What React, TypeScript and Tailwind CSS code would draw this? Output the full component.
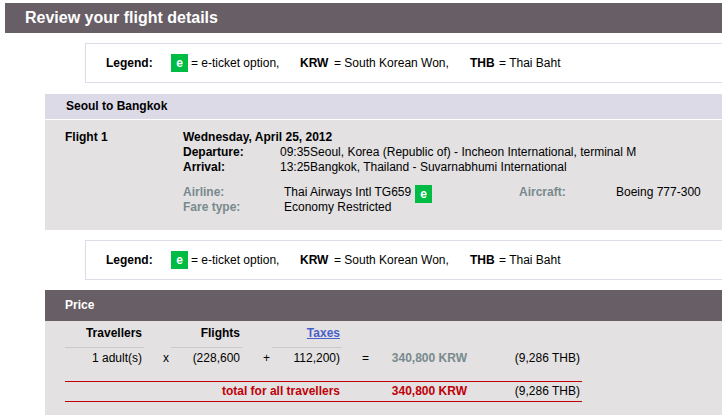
import type { ReactNode } from 'react';

/* ------------------------------------------------------------------ */
/* Data                                                                */
/* ------------------------------------------------------------------ */

interface FlightStop {
  label: string;
  time: string;
  place: string;
}

const STOPS: FlightStop[] = [
  {
    label: 'Departure:',
    time: '09:35',
    place: 'Seoul, Korea (Republic of) - Incheon International, terminal M',
  },
  {
    label: 'Arrival:',
    time: '13:25',
    place: 'Bangkok, Thailand - Suvarnabhumi International',
  },
];

/* ------------------------------------------------------------------ */
/* Shared pieces                                                       */
/* ------------------------------------------------------------------ */

/** Green marker for flights that can be issued as an e-ticket. */
function ETicketBadge() {
  return (
    <span className="flex h-[18px] w-[17px] shrink-0 items-center justify-center bg-[#00bb44] text-xs font-bold text-white">
      e
    </span>
  );
}

/** Explains the badge and the currency codes. */
function Legend() {
  return (
    <div className="ml-20 flex h-10 items-center border border-r-0 border-[#dddbe8] pl-5">
      <span className="w-[65px] font-bold">Legend:</span>
      <span className="flex w-[129px] items-center gap-[3px]">
        <ETicketBadge />= e-ticket option,
      </span>
      <span className="flex w-[170px]">
        <b className="w-[34px]">KRW</b>= South Korean Won,
      </span>
      <span className="flex">
        <b className="w-[29px]">THB</b>= Thai Baht
      </span>
    </div>
  );
}

/** Table heading with the thin rule beneath it. */
function PriceHeading({ children }: { children: ReactNode }) {
  return (
    <th className="h-[27px] border-b border-[#cbc9ca] px-[2px] pb-[2px] font-bold">
      {children}
    </th>
  );
}

/* ------------------------------------------------------------------ */
/* Sections                                                            */
/* ------------------------------------------------------------------ */

function FlightSection() {
  return (
    <section className="ml-10">
      <h2 className="mb-px bg-[#dddae8] py-[5px] pl-[21px] font-bold">
        Seoul to Bangkok
      </h2>
      <div className="flex bg-[#e3e1e2] pt-[10px] pb-[15px] pl-5">
        <h3 className="w-[118px] shrink-0 font-bold">Flight 1</h3>
        <div className="min-w-0 flex-1">
          <p className="font-bold">Wednesday, April 25, 2012</p>
          <dl>
            {STOPS.map((stop) => (
              <div key={stop.label} className="flex">
                <dt className="w-[97px] shrink-0 font-bold">{stop.label}</dt>
                <dd>
                  {stop.time}
                  {stop.place}
                </dd>
              </div>
            ))}
          </dl>
          <dl className="mt-[10px]">
            <div className="flex h-[15px]">
              <dt className="w-[101px] font-bold text-[#788a8d]">Airline:</dt>
              <dd className="flex w-[235px] gap-1">
                Thai Airways Intl TG659
                <ETicketBadge />
              </dd>
              <dt className="w-[97px] font-bold text-[#788a8d]">Aircraft:</dt>
              <dd>Boeing 777-300</dd>
            </div>
            <div className="flex">
              <dt className="w-[101px] font-bold text-[#788a8d]">Fare type:</dt>
              <dd>Economy Restricted</dd>
            </div>
          </dl>
        </div>
      </div>
    </section>
  );
}

function PriceSection() {
  return (
    <section className="ml-10 flex flex-1 flex-col">
      <h2 className="bg-[#685e66] py-2 pl-5 font-bold text-white">Price</h2>
      <div className="flex-1 bg-[#e3e1e2] pb-3 pl-5">
        <table className="w-[517px] table-fixed border-separate border-spacing-0 text-right">
          <colgroup>
            <col className="w-[79px]" />
            <col className="w-[27px]" />
            <col className="w-[71px]" />
            <col className="w-[30px]" />
            <col className="w-[70px]" />
            <col className="w-[29px]" />
            <col className="w-[98px]" />
            <col className="w-[113px]" />
          </colgroup>
          <thead>
            <tr>
              <PriceHeading>Travellers</PriceHeading>
              <td />
              <PriceHeading>Flights</PriceHeading>
              <td />
              <PriceHeading>
                <a href="#taxes" className="text-[#4a5fcb] underline">
                  Taxes
                </a>
              </PriceHeading>
              <td colSpan={3} />
            </tr>
          </thead>
          <tbody>
            <tr className="[&>td]:px-[2px] [&>td]:pt-[3px] [&>td]:pb-[15px]">
              <td>1 adult(s)</td>
              <td>x</td>
              <td>(228,600</td>
              <td>+</td>
              <td>112,200)</td>
              <td>=</td>
              <td className="font-bold text-[#788a8d]">340,800 KRW</td>
              <td>(9,286 THB)</td>
            </tr>
          </tbody>
          <tfoot>
            <tr className="[&>*]:h-[21px] [&>*]:border-y [&>*]:border-[#c00008] [&>*]:px-[2px]">
              <th colSpan={5} className="font-bold text-[#c00008]">
                total for all travellers
              </th>
              <td />
              <td className="font-bold text-[#c00008]">340,800 KRW</td>
              <td>(9,286 THB)</td>
            </tr>
          </tfoot>
        </table>
      </div>
    </section>
  );
}

export default function App() {
  return (
    <main className="flex min-h-screen flex-col bg-white pt-[3px] pl-[5px] font-['Liberation_Sans',Arial,sans-serif] text-xs leading-[15px] text-black">
      <h1 className="bg-[#685e66] py-[5px] pl-5 text-base leading-5 font-bold text-white">
        Review your flight details
      </h1>
      <div className="mt-[10px] mb-[11px]">
        <Legend />
      </div>
      <FlightSection />
      <div className="my-[10px]">
        <Legend />
      </div>
      <PriceSection />
    </main>
  );
}
